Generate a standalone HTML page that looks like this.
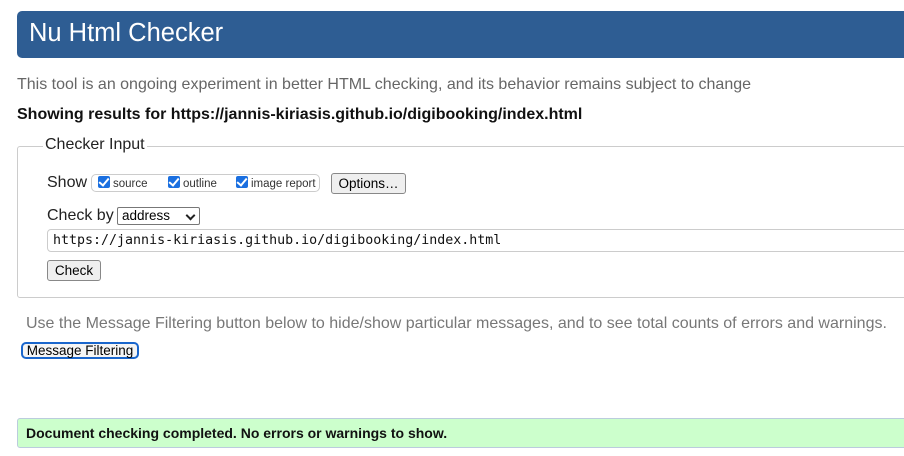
<!DOCTYPE html>
<html><head><style>
body{margin:0;width:904px;height:456px;overflow:hidden;background:#fff;font-family:"Liberation Sans",Arial,sans-serif;position:relative}
.a{position:absolute;white-space:nowrap}
.hdr{left:17px;top:11px;width:900px;height:47px;background:#2e5d93;border-radius:5px}
.hdr span{position:absolute;left:12px;top:8px;color:#fff;font-size:25.5px}
.cb{display:inline-block;width:12px;height:12px;background:#1a6fe0;border-radius:2px;vertical-align:-1px;margin-right:3px;position:relative}
.cb:after{content:"";position:absolute;left:3px;top:0px;width:4px;height:8px;border:solid #fff;border-width:0 2px 2px 0;transform:rotate(40deg)}
.btn{border:1px solid #888;background:#efefef;border-radius:3px;font-size:13.5px;text-align:center;box-sizing:border-box}
</style></head><body>
<div class="a hdr"><span>Nu Html Checker</span></div>
<div class="a" style="left:17px;top:76px;font-size:16px;color:#666">This tool is an ongoing experiment in better HTML checking, and its behavior remains subject to change</div>
<div class="a" style="left:17px;top:106px;font-size:16px;font-weight:bold;color:#111">Showing results for https://jannis-kiriasis.github.io/digibooking/index.html</div>
<div class="a" style="left:17px;top:146px;width:900px;height:152px;border:1px solid #ccc;border-radius:3px;box-sizing:border-box"></div>
<div class="a" style="left:43px;top:136px;background:#fff;padding:0 2px;font-size:16px;color:#222">Checker Input</div>
<div class="a" style="left:47px;top:174px;font-size:16px;color:#222">Show</div>
<div class="a" style="left:91px;top:174px;width:229px;height:18px;border:1px solid #ccc;border-radius:5px;box-sizing:border-box"></div>
<div class="a" style="left:98px;top:176px;font-size:11.5px;color:#333"><span class="cb"></span>source</div>
<div class="a" style="left:168px;top:176px;font-size:11.5px;color:#333"><span class="cb"></span>outline</div>
<div class="a" style="left:236px;top:176px;font-size:11.5px;color:#333"><span class="cb"></span>image report</div>
<div class="a btn" style="left:331px;top:173px;width:75px;height:21px;line-height:19px">Options…</div>
<div class="a" style="left:47px;top:207px;font-size:16px;color:#222">Check by</div>
<div class="a" style="left:117px;top:207px;width:83px;height:18px;border:1px solid #777;border-radius:2px;box-sizing:border-box;font-size:13.5px;line-height:16px;padding-left:4px">address<span style="position:absolute;right:5px;top:4px;width:5px;height:5px;border:solid #222;border-width:0 2px 2px 0;transform:rotate(45deg)"></span></div>
<div class="a" style="left:47px;top:229px;width:870px;height:23px;border:1px solid #ccc;border-radius:4px;box-sizing:border-box;font-family:'DejaVu Sans Mono','Liberation Mono',monospace;font-size:13.3px;line-height:21px;padding-left:5px;color:#111">https://jannis-kiriasis.github.io/digibooking/index.html</div>
<div class="a btn" style="left:47px;top:260px;width:54px;height:21px;line-height:19px">Check</div>
<div class="a" style="left:26px;top:315px;font-size:16px;color:#777">Use the Message Filtering button below to hide/show particular messages, and to see total counts of errors and warnings.</div>
<div class="a" style="left:21px;top:342px;width:118px;height:17px;border:2px solid #1a66cc;border-radius:5px;box-sizing:border-box;font-size:13.5px;line-height:13px;text-align:center;background:#f5f5f5">Message Filtering</div>
<div class="a" style="left:17px;top:418px;width:900px;height:30px;background:#ccffcc;border:1px solid #bcd;border-radius:3px;box-sizing:border-box"></div>
<div class="a" style="left:26px;top:425px;font-size:14px;font-weight:bold;color:#111">Document checking completed. No errors or warnings to show.</div>
</body></html>
